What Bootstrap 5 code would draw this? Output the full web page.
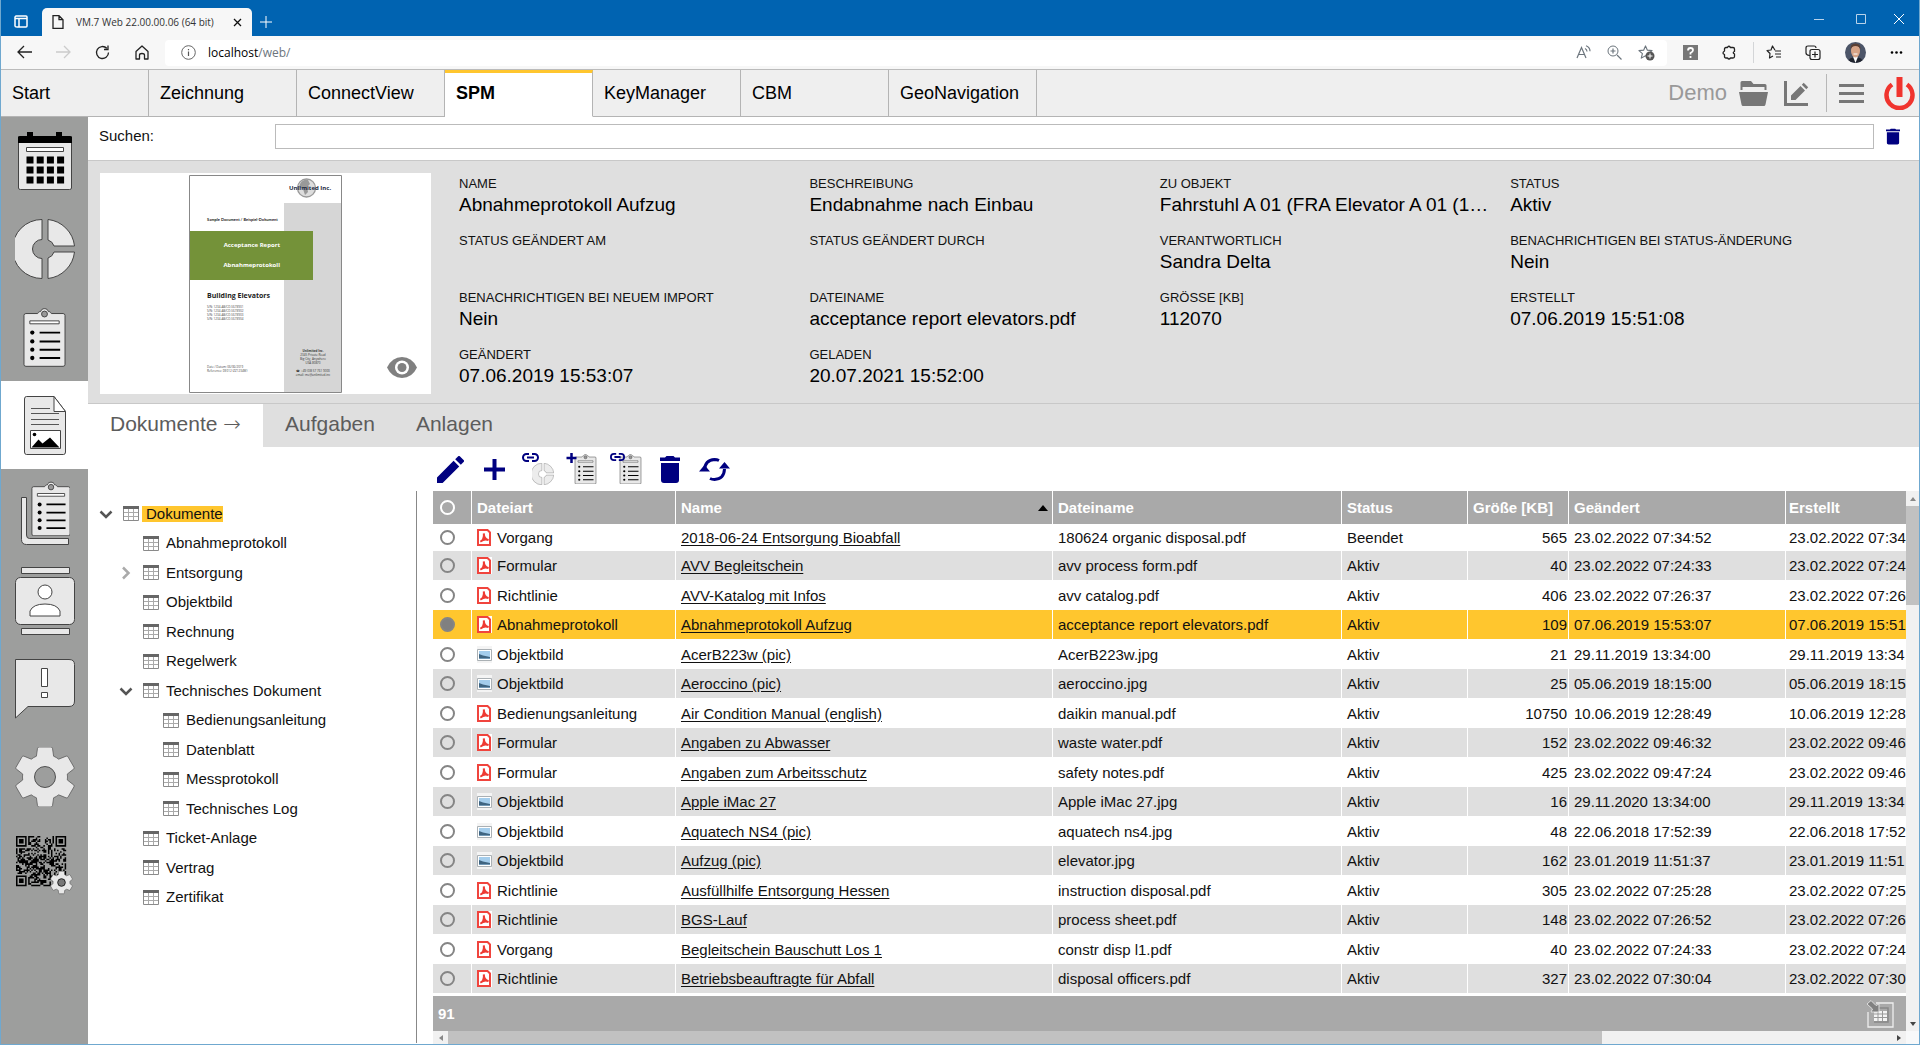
<!DOCTYPE html>
<html lang="de">
<head>
<meta charset="utf-8">
<meta name="viewport" content="width=device-width, initial-scale=1">
<title>VM.7 Web 22.00.00.06 (64 bit)</title>
<link href="https://cdn.jsdelivr.net/npm/bootstrap@5.3.0/dist/css/bootstrap.min.css" rel="stylesheet">
<style>
body{font-family:"Liberation Sans",Arial,sans-serif;font-size:15px;line-height:20px;color:#111;height:100vh;overflow:hidden;border:1px solid #6fa8cf;border-width:0 1px 1px 1px}
button{background:none;border:0;padding:0;color:inherit;line-height:0}
svg{display:block;flex:none}
.chrome-font{font-family:"Open Sans","Noto Sans",sans-serif}
.titlebar{height:36px;background:#0063b1;color:#fff;padding:0 11px 0 13px}
.page-tab{height:28px;width:210px;background:#f7f7f7;color:#333;border-radius:5px 5px 0 0;font-size:10px;padding:0 10px;margin-left:13px}
.addressbar{height:34px;background:#f7f7f7;border-bottom:1px solid #bbb;color:#222}
.address{height:26px;background:#fff;border-radius:4px;font-size:12px;padding:0 12px 0 16px;color:#555}
.nav-ico{width:39px;display:flex;justify-content:center}
.menubar{height:47px;background:#efefef;border-bottom:1px solid #b4b4b4}
.menubar a{width:148px;height:47px;border-right:1px solid #b4b4b4;border-bottom:1px solid #b4b4b4;padding-left:11px;font-size:18px;color:#000;text-decoration:none;display:flex;align-items:center}
.menubar a.current{background:#fff;border-top:3px solid #ffc62e;border-bottom-color:#fff;padding-bottom:3px;font-weight:700}
.demo{font-size:22px;color:#999}
.side{width:87px;background:#9d9e9d}
.side button{height:88px;display:flex;align-items:center;justify-content:center;width:100%}
.side button.current{background:#fff}
.search{height:44px;border-bottom:1px solid #c8c8c8;padding:0 19px 5px 11px}
.search label{width:176px}
.search input{height:25px;border:1px solid #bbb;border-radius:0;outline:0;padding:0 5px}
.detail{height:243px;background:#dfdfdf;border-bottom:1px solid #c8c8c8;padding:12px 0 0 12px}
.preview{width:331px;height:221px;background:#fff;position:relative;flex:none;display:flex;justify-content:center;padding-top:2px}
.preview button{position:absolute;right:14px;bottom:16px}
.fields{display:grid;grid-template-columns:repeat(4,24%);grid-auto-rows:57px;margin:1px 0 0 28px;min-width:0}
.fields dt{font-weight:400;font-size:13px;line-height:20px}
.fields dd{margin:0;font-size:19px;line-height:22px;height:22px;color:#000;white-space:nowrap}
.subtabs{height:43px;background:#dfdfdf;font-size:21px}
.subtabs a{color:#5c5c5c;text-decoration:none;height:43px;padding:0 21px 0 22px;line-height:39px}
.subtabs a.current{background:#fff;width:175px}
.subtabs a:last-child{padding-left:20px}
.subtabs span{font-family:"DejaVu Sans",sans-serif;font-weight:200}
.tools{height:44px;margin-left:346px}
.tools button{width:32px;height:32px;display:flex;align-items:center;justify-content:center}
.tree{width:329px;border-right:1px solid #888;padding:8px 0 0 10px;flex:none;list-style:none;margin:0 0 1px}
.tree li{display:flex;align-items:center;height:29px}
.tree li:nth-child(even){height:30px}
.tree .lv1{padding-left:20px}
.tree .lv2{padding-left:40px}
.tree .chev{width:16px;height:16px;margin-right:9px}
.tree a{color:#111;text-decoration:none;margin-left:3px;padding:0 0 0 4px;line-height:16px}
.tree a.sel{background:#ffc62e}
.gridwrap{margin-left:16px;min-width:0}
.docs{table-layout:fixed;width:100%;border-collapse:separate;border-spacing:0;white-space:nowrap}
.docs th{height:33px;background:#a9a9a9;color:#fff;font-weight:700;border-right:1px solid #fff}
.docs th,.docs td{padding:0 0 0 5px;overflow:hidden}
.docs td{height:29px;line-height:20px;border-right:1px solid #fff}
.docs tbody tr:nth-child(even) td{height:30px;background:#dfdfdf;border-bottom:1px solid #fff}
.docs tbody tr:first-child td{height:27px}
.docs tbody tr.sel td{background:#ffc62e}
.docs td:nth-child(6){text-align:right;padding:0 1px 0 0}
.docs th:last-child,.docs td:last-child{border-right:0;padding-left:3px}
.docs td a{color:#111;text-decoration:underline;text-underline-offset:2px}
.docs input{appearance:none;width:15px;height:15px;border:2px solid #858585;border-radius:50%;display:block;margin:0 0 0 2px}
.docs th input{border-color:#fff}
.docs input:checked{background:#808080}
.kind{display:flex;align-items:center;gap:5px}
.gridfoot{height:35px;background:#a9a9a9;color:#fff;font-weight:700;padding:0 12px 0 5px}
.sbar{background:#f1f1f1}
.vbar{width:13px}
.vbar .thumb{height:99px;background:#c1c1c1}
.hbar{height:13px}
.hbar .thumb{width:80%;background:#c1c1c1}
.arrow{height:15px;display:flex;align-items:center;justify-content:center}
.hbar .arrow{width:15px;height:13px}
</style>
<script src="https://cdn.jsdelivr.net/npm/bootstrap@5.3.0/dist/js/bootstrap.bundle.min.js"></script>
</head>
<body class="d-flex flex-column">
<svg width="0" height="0" class="position-absolute">
<defs>
<symbol id="tbl" viewBox="0 0 16 15"><path fill="#fff" stroke="#8a8a8a" d="M.5.5h15v14H.5z"/><path fill="#666" d="M0 0h16v3H0z"/><path stroke="#aaa" d="M5.5 3v11M10.500 3v11M1 6.500h14M1 10.500h14"/></symbol>
<symbol id="pdf" viewBox="0 0 15 17"><path fill="#fff" d="M0 0h15v17H0z"/><path fill="#fff" stroke="#f0443d" stroke-width="2" d="M1 1h9.500L13 3.500V16H1z"/><path fill="none" stroke="#ee3a33" stroke-width="2" d="M3.500 12.500c2-.5 4-4 3.300-8 .2 4 2 6 4.700 6.500-2.500-1-5.500-.5-8 1.500z"/></symbol>
<symbol id="pic" viewBox="0 0 15 17"><path fill="#f4f4f4" d="M0 0h15v17H0z"/><path fill="#fff" stroke="#aab0b4" d="M.5 3.500h14v11H.5z"/><path fill="#a4cdec" d="M2 5h11v8H2z"/><path fill="#3f6480" d="M2 8l4 1.500 7 1.500v1.500H2z"/></symbol>
<symbol id="clip" viewBox="0 0 44 60"><path fill="#e8e8e8" stroke="#444" d="M3 6h12c1-2 2-2 3-2 1-4 7-4 8 0 1 0 2 0 3 2h12q2 0 2 2v50q0 2-2 2H3q-2 0-2-2V8q0-2 2-2z"/><circle cx="22" cy="6.500" r="3" fill="#999" stroke="#444"/><path fill="#fff" stroke="#444" d="M7 13.500h30v3H7z"/><path stroke="#000" stroke-width="2" d="M17 25.500h21M17 34.500h21M17 43h21M17 51.500h21"/><g><circle cx="9.500" cy="25.500" r="2.200"/><circle cx="9.500" cy="34.500" r="2.200"/><circle cx="9.500" cy="43" r="2.200"/><circle cx="9.500" cy="51.500" r="2.200"/></g></symbol>
<symbol id="donut" viewBox="0 0 60 60"><path fill="#e8e8e8" stroke="#444" d="M27 .5v20a9.500 9.500 0 0 0 0 19v20A29.500 29.500 0 0 1 27 .5zM33 .5A30 30 0 0 1 59.500 27H39a9 9 0 0 0-6-6zM59.500 33A30 30 0 0 1 33 59.500V39a9 9 0 0 0 6-6z"/></symbol>
<symbol id="gear" viewBox="0 0 24 24"><path d="M19.430 12.980c.04-.32.070-.64.070-.98s-.03-.66-.07-.98l2.110-1.650c.19-.15.240-.42.120-.64l-2-3.460c-.12-.22-.39-.3-.61-.22l-2.490 1c-.52-.4-1.080-.73-1.690-.98l-.38-2.650A.49.490 0 0 0 14 2h-4c-.25 0-.46.180-.49.420l-.38 2.650c-.61.250-1.170.59-1.690.98l-2.490-1c-.23-.09-.49 0-.61.220l-2 3.460c-.13.220-.07.490.12.640l2.110 1.650c-.04.320-.07.650-.07.980s.03.660.07.980l-2.110 1.650c-.19.150-.24.420-.12.640l2 3.460c.12.220.39.300.61.220l2.490-1c.52.400 1.080.730 1.690.980l.38 2.650c.03.240.24.420.49.420h4c.25 0 .46-.18.490-.42l.38-2.650c.61-.25 1.170-.59 1.690-.98l2.490 1c.23.090.49 0 .61-.22l2-3.460c.12-.22.070-.49-.12-.64z"/></symbol>
<symbol id="trash" viewBox="4 3 16 18"><path d="M5 19c0 1.100.9 2 2 2h10c1.100 0 2-.9 2-2V7H5zM20 4h-4.500l-1-1h-5l-1 1H4v2h16z"/></symbol>
<symbol id="chain" viewBox="0 0 17 9"><path fill="none" stroke="#000080" stroke-width="2" d="M7 1H4.500a3.500 3.500 0 0 0 0 7H7M10 1h2.500a3.500 3.500 0 0 1 0 7H10M5 4.500h7"/></symbol>
<symbol id="star" viewBox="0 0 16 16"><path fill="none" stroke="currentColor" stroke-width="1.200" stroke-linejoin="round" d="M8 1l2 4.500 5 .5-3.700 3.200L12.500 14 8 11.500 3.500 14l1.200-4.800L1 6l5-.5z"/></symbol>
</defs>
</svg>

<div class="titlebar chrome-font d-flex align-items-end flex-none">
  <svg class="mb-2" width="15" height="13" viewBox="0 0 15 13"><path fill="none" stroke="#fff" stroke-width="1.500" d="M2 1h10q1 0 1 1v9q0 1-1 1H3q-2 0-2-1V2zM1 3.500h12M5 4v8"/></svg>
  <div class="page-tab d-flex align-items-center">
    <svg width="12" height="14" viewBox="0 0 12 14"><path fill="none" stroke="#222" stroke-width="1.300" d="M1 .7h6l4 4v8.600H1zM7 .7v4h4"/></svg>
    <span class="flex-grow-1 text-nowrap ms-2 ps-1">VM.7 Web 22.00.00.06 (64 bit)</span>
    <button type="button" aria-label="Tab schließen"><svg width="9" height="9" viewBox="0 0 9 9"><path stroke="#111" stroke-width="1.300" d="M1 1l7 7M8 1L1 8"/></svg></button>
  </div>
  <button type="button" class="ms-2 mb-2" aria-label="Neuer Tab"><svg width="12" height="12" viewBox="0 0 12 12"><path stroke="#fff" d="M6 0v12M0 6h12"/></svg></button>
  <div class="ms-auto d-flex align-items-center gap-4 mb-2 pb-1 me-1">
    <button type="button" class="me-2" aria-label="Minimieren"><svg width="10" height="10" viewBox="0 0 10 10"><path stroke="#b9d3ea" d="M0 5.500h10"/></svg></button>
    <button type="button" class="me-1" aria-label="Maximieren"><svg width="10" height="10" viewBox="0 0 10 10"><path fill="none" stroke="#b9d3ea" d="M.5.5h9v9h-9z"/></svg></button>
    <button type="button" aria-label="Schließen"><svg width="10" height="10" viewBox="0 0 10 10"><path stroke="#fff" d="M0 0l10 10M10 0L0 10"/></svg></button>
  </div>
</div>

<div class="addressbar chrome-font d-flex align-items-center">
  <div class="d-flex ps-1 me-1">
    <button type="button" class="nav-ico" aria-label="Zurück"><svg width="15" height="14" viewBox="0 0 15 14"><path fill="none" stroke="#222" stroke-width="1.300" d="M15 7H1M7 1L1 7l6 6"/></svg></button>
    <button type="button" class="nav-ico" aria-label="Vorwärts"><svg width="15" height="14" viewBox="0 0 15 14"><path fill="none" stroke="#ccc" stroke-width="1.300" d="M0 7h14M8 1l6 6-6 6"/></svg></button>
    <button type="button" class="nav-ico" aria-label="Neu laden"><svg width="15" height="15" viewBox="0 0 15 15"><path fill="none" stroke="#222" stroke-width="1.300" d="M13.500 7.500a6 6 0 1 1-1.700-4.200M13 .5v4H9"/></svg></button>
    <button type="button" class="nav-ico" aria-label="Startseite"><svg width="14" height="15" viewBox="0 0 14 15"><path fill="none" stroke="#222" stroke-width="1.300" stroke-linejoin="round" d="M1 6.500L7 1l6 5.500V14H9.500v-4q0-1.500-2.500-1.500T4.500 10v4H1z"/></svg></button>
  </div>
  <div class="address d-flex align-items-center flex-grow-1">
    <svg width="15" height="15" viewBox="0 0 15 15"><circle cx="7.500" cy="7.500" r="6.800" fill="none" stroke="#666"/><path stroke="#555" stroke-width="1.200" d="M7.500 6.500V11M7.500 4v1.300"/></svg>
    <a href="#" class="text-decoration-none ms-2 ps-1 text-secondary"><span class="text-black">localhost</span>/web/</a>
    <div class="ms-auto d-flex align-items-center gap-3 text-secondary">
      <svg width="15" height="15" viewBox="0 0 15 15"><path fill="none" stroke="currentColor" stroke-width="1.200" d="M1 13L5.500 2.500 10 13M2.500 9.500h6M9 3.500q2 1 2 3M10 .8q4 1.500 4 5.500"/></svg>
      <svg width="15" height="15" viewBox="0 0 15 15"><path fill="none" stroke="currentColor" stroke-width="1.200" d="M10 10l4.500 4.500M3.500 6h5M6 3.500v5"/><circle cx="6" cy="6" r="5" fill="none" stroke="currentColor"/></svg>
      <svg width="17" height="16" viewBox="0 0 17 16"><use href="#star" width="15" height="15"/><circle cx="12" cy="11" r="4.500" fill="#555"/><path stroke="#fff" d="M12 8.500v5M9.500 11h5"/></svg>
    </div>
  </div>
  <div class="d-flex align-items-center ps-3 pe-3">
    <svg width="15" height="15" viewBox="0 0 15 15"><path fill="#777" d="M0 0h15v15H0z"/><path fill="none" stroke="#fff" stroke-width="1.800" d="M5 5.500q0-2.500 2.500-2.500T10 5.200Q10 6.500 7.500 8v1.500M7.500 11v2"/></svg>
    <svg class="ms-4" width="15" height="15" viewBox="0 0 15 15"><path fill="none" stroke="#222" stroke-width="1.300" stroke-linejoin="round" d="M4 2.500h1.500q1-2.500 3 0H11q1.500 0 1.500 1.500v2.500q-2.500 1 0 2.500v2.500q0 1.500-1.500 1.500H8.500q-1.500 2-3 0H4q-1.500 0-1.500-1.500V9.500Q-.5 8 2.500 6V4q0-1.500 1.500-1.500z"/></svg>
    <div class="vr ms-3 me-2 my-0 text-secondary"></div>
    <svg class="ms-1" width="15" height="15" viewBox="0 0 15 15"><path fill="none" stroke="#222" stroke-width="1.200" stroke-linejoin="round" d="M9 5.200L6.500 1 5 5l-4 .5L4 8.500 3.500 13 7 11M9 6h6M9 9h6M10 12h5"/></svg>
    <svg class="ms-4" width="16" height="16" viewBox="0 0 16 16"><path fill="none" stroke="#222" stroke-width="1.200" d="M4.500 10.500Q1 10 1 8V3q0-2 2-2h6q2 0 2 2M7 4.500h6q2 0 2 2v6q0 2-2 2H7q-2 0-2-2v-6q0-2 2-2zM10 6.500v6M7 9.500h6"/></svg>
    <svg class="ms-4" width="21" height="21" viewBox="0 0 21 21"><clipPath id="av"><circle cx="10.500" cy="10.500" r="10.500"/></clipPath><g clip-path="url(#av)"><path fill="#4c5568" d="M0 0h21v21H0z"/><path fill="#20242f" d="M2 21q2-6 8.500-6t8.500 6z"/><path fill="#fff" d="M8 14.500h5L10.500 21z"/><ellipse cx="10.500" cy="9" rx="4.500" ry="6.500" fill="#d7a487"/><path fill="#5a4035" d="M5.500 7.500q-.5-6 5-6t5 6q-1-3.500-5-3.500t-5 3.500z"/><path stroke="#fff" d="M8.500 12h4"/></g></svg>
    <svg class="ms-4" width="13" height="5" viewBox="0 0 13 5"><circle cx="2" cy="2.500" r="1.300"/><circle cx="6.500" cy="2.500" r="1.300"/><circle cx="11" cy="2.500" r="1.300"/></svg>
  </div>
</div>

<nav class="menubar d-flex">
  <a href="#">Start</a><a href="#">Zeichnung</a><a href="#">ConnectView</a><a href="#" class="current">SPM</a><a href="#">KeyManager</a><a href="#">CBM</a><a href="#">GeoNavigation</a>
  <div class="ms-auto d-flex align-items-center">
    <span class="demo">Demo</span>
    <button type="button" class="ms-2 ps-1" aria-label="Öffnen"><svg width="29" height="25" viewBox="0 0 29 25"><path fill="#777" d="M1.500 9V1.500Q1.500 0 3 0h9l2.500 3H26q1.500 0 1.500 1.500V9h-2V6h-22v3zM0 11h29l-2.500 12.500Q26 25 25 25H4q-1.200 0-1.500-1.500z"/></svg></button>
    <button type="button" class="ms-3" aria-label="Auswertung"><svg width="26" height="25" viewBox="0 0 26 25"><path fill="#777" d="M0 0h3v22h21v3H0zM7 14.500V19h4.500L21 9.500 16.500 5zM17.800 3.700l1.900-1.900L24.200 6.300l-1.900 1.900z"/></svg></button>
    <div class="vr ms-3 me-2 my-1"></div>
    <button type="button" class="ms-1" aria-label="Menü"><svg width="25" height="19" viewBox="0 0 25 19"><path stroke="#777" stroke-width="3" d="M0 1.500h25M0 9.500h25M0 17.500h25"/></svg></button>
    <button type="button" class="ms-3 ps-1 me-1" aria-label="Abmelden"><svg width="31" height="33" viewBox="0 0 31 33"><path fill="none" stroke="#f0342e" stroke-width="4.500" d="M8 7.500a13 13 0 1 0 15 0"/><path fill="#f0342e" d="M12.500 0h6v20h-6z"/></svg></button>
  </div>
</nav>

<div class="d-flex flex-grow-1" style="min-height:0">
  <aside class="side flex-shrink-0">
    <button type="button" aria-label="Kalender"><svg width="54" height="58" viewBox="0 0 54 58"><path d="M9 0h6v5H9zM38 0h6v5h-6z"/><path fill="#e8e8e8" stroke="#444" d="M.5 6h53v50q0 1.500-2 1.500h-49q-2 0-2-1.500z"/><path d="M0 11V5q0-1 2-1h50q2 0 2 1v6z"/><path fill="#fff" stroke="#444" d="M8.500 15.500h37v4h-37z"/><path stroke="#000" stroke-width="7" stroke-dasharray="7 3.200" d="M8.500 28h38M8.500 38h38M8.500 48h38"/></svg></button>
    <button type="button" aria-label="Objekte"><svg width="60" height="60"><use href="#donut"/></svg></button>
    <button type="button" aria-label="Aufgaben"><svg width="43" height="60"><use href="#clip"/></svg></button>
    <button type="button" class="current" aria-label="Dokumente"><svg width="42" height="59" viewBox="0 0 42 59"><path fill="#e8e8e8" stroke="#444" d="M2.500.5H30l11.500 15V56q0 2.500-2 2.500h-37Q.5 58.500.5 56V3Q.5.500 2.500.5z"/><path fill="#fff" stroke="#444" d="M30 .5v15h11.500z"/><path stroke="#555" d="M7 12.500h19M7 17.500h28M7 23.500h28M7 28.500h28"/><path fill="#fff" stroke="#444" d="M6.500 34.500h30v18h-30z"/><circle cx="10.500" cy="38.500" r="1.800"/><path d="M7.500 51.500l7-8 4 4 7.500-6 9.500 10z"/></svg></button>
    <button type="button" aria-label="Vorlagen"><svg width="50" height="64" viewBox="0 0 50 64"><path fill="#e8e8e8" stroke="#444" d="M1.500 16.500h5V54q0 3.500 3 3.500h39v6h-42q-5 0-5-5z"/><svg x="11" y="0" width="40" height="55"><use href="#clip"/></svg></svg></button>
    <button type="button" aria-label="Kontakte"><svg width="60" height="68" viewBox="0 0 60 68"><g fill="#e8e8e8" stroke="#444"><path d="M6.500.5h48v6h-48zM6.500 61.500h48v6h-48z"/><rect x=".5" y="10.500" width="59" height="47" rx="5"/><circle cx="30" cy="25" r="7" fill="#fff"/><path fill="#fff" d="M15 49v-5q3-7 15-7t15 7v5z"/></g></svg></button>
    <button type="button" aria-label="Meldungen"><svg width="60" height="60" viewBox="0 0 60 60"><path fill="#e8e8e8" stroke="#444" d="M.5.500H54q5.500 0 5.500 5V42q0 5.500-5.500 5.500H13L.5 59z"/><path fill="#fff" stroke="#444" d="M26.500 9.500h6v18h-6zM26.500 33.500h6v5h-6z"/></svg></button>
    <button type="button" aria-label="Einstellungen"><svg width="60" height="60" viewBox="2 2 20 20"><use href="#gear" x="0" y="0" width="24" height="24" fill="#e8e8e8" stroke="#555" stroke-width=".25"/><circle cx="12" cy="12" r="3.500" fill="#9d9e9d" stroke="#444" stroke-width=".3"/></svg></button>
    <button type="button" aria-label="QR-Code"><svg width="59" height="60" viewBox="0 0 59 60"><path id="qr" transform="translate(1 1) scale(1.520)"/><use href="#gear" x="33" y="34" width="27" height="27" fill="#e8e8e8" stroke="#555" stroke-width=".5"/><circle cx="46.500" cy="47.500" r="3.800" fill="#777" stroke="#222"/></svg></button>
  </aside>

  <main class="flex-grow-1 d-flex flex-column" style="min-width:0">
    <form class="search d-flex align-items-center">
      <label for="q">Suchen:</label>
      <input id="q" type="text" class="flex-grow-1">
      <button type="button" class="ms-2" aria-label="Suche löschen"><svg class="ms-1" width="14" height="17" fill="#000080"><use href="#trash"/></svg></button>
    </form>

    <section class="detail d-flex">
      <div class="preview">
        <svg width="154" height="218" viewBox="0 0 154 218" font-family="Open Sans, sans-serif">
          <path fill="#fff" stroke="#888" d="M.5.500h152v217H.5z"/><path fill="#d6d6d6" d="M95 28h57v189H95z"/>
          <circle cx="117.500" cy="13" r="9" fill="#ddd" stroke="#999" stroke-width="1.300"/><path fill="#999" d="M111 9q3-5 8-4l2 4-3 3 1 5-3 3-2-6-4-2z"/>
          <text x="100" y="15" font-size="6" font-weight="700" fill="#222a40">Unlimited Inc.</text>
          <text x="18" y="46" font-size="4" font-weight="700" fill="#222" font-family="Lato, sans-serif">Sample Document / Beispiel-Dokument</text>
          <path fill="#749239" d="M1 56h123v49H1z"/>
          <g font-size="6" font-weight="700" fill="#fff" text-anchor="end"><text x="91" y="72">Acceptance Report</text><text x="91" y="92">Abnahmeprotokoll</text></g>
          <text x="18" y="123" font-size="7" font-weight="700" fill="#222">Building Elevators</text>
          <g font-size="3" fill="#444"><text x="18" y="133">S/N: 1234-AB/CD-5678901</text><text x="18" y="137">S/N: 1234-AB/CD-5678902</text><text x="18" y="141">S/N: 1234-AB/CD-5678903</text><text x="18" y="145">S/N: 1234-AB/CD-5678904</text><text x="18" y="193">Date / Datum: 06/06/2019</text><text x="18" y="197">Reference: DE012 (ZZ1234W)</text></g>
          <g font-size="3" fill="#333" text-anchor="middle"><text x="124" y="177" font-weight="700">Unlimited Inc.</text><text x="124" y="181">2345 Private Road</text><text x="124" y="185">Big City, Anywhere</text><text x="124" y="189">USA 80870</text><text x="124" y="197">☎ +49 (0)8 57 761 9000</text><text x="124" y="201">email: me@unlimited.inc</text></g>
        </svg>
        <button type="button" aria-label="Vorschau"><svg width="30" height="21" viewBox="0 0 30 21"><path fill="#808080" d="M0 10.500Q5 0 15 0t15 10.500Q25 21 15 21T0 10.500z"/><circle cx="15" cy="10.500" r="7" fill="#fff"/><circle cx="15" cy="10.500" r="4.500" fill="#808080"/></svg></button>
      </div>
      <dl class="fields flex-grow-1">
        <div><dt>NAME</dt><dd>Abnahmeprotokoll Aufzug</dd></div>
        <div><dt>BESCHREIBUNG</dt><dd>Endabnahme nach Einbau</dd></div>
        <div><dt>ZU OBJEKT</dt><dd>Fahrstuhl A 01 (FRA Elevator A 01 (1…</dd></div>
        <div><dt>STATUS</dt><dd>Aktiv</dd></div>
        <div><dt>STATUS GEÄNDERT AM</dt><dd></dd></div>
        <div><dt>STATUS GEÄNDERT DURCH</dt><dd></dd></div>
        <div><dt>VERANTWORTLICH</dt><dd>Sandra Delta</dd></div>
        <div><dt>BENACHRICHTIGEN BEI STATUS-ÄNDERUNG</dt><dd>Nein</dd></div>
        <div><dt>BENACHRICHTIGEN BEI NEUEM IMPORT</dt><dd>Nein</dd></div>
        <div><dt>DATEINAME</dt><dd>acceptance report elevators.pdf</dd></div>
        <div><dt>GRÖSSE [KB]</dt><dd>112070</dd></div>
        <div><dt>ERSTELLT</dt><dd>07.06.2019 15:51:08</dd></div>
        <div><dt>GEÄNDERT</dt><dd>07.06.2019 15:53:07</dd></div>
        <div><dt>GELADEN</dt><dd>20.07.2021 15:52:00</dd></div>
      </dl>
    </section>

    <nav class="subtabs d-flex"><a href="#" class="current text-nowrap">Dokumente <span>→</span></a><a href="#">Aufgaben</a><a href="#">Anlagen</a></nav>

    <div class="tools d-flex align-items-center">
      <div class="d-flex" style="column-gap:12px">
        <button type="button" aria-label="Bearbeiten"><svg width="27" height="27" viewBox="3 3 18 18" fill="#000080"><path d="M3 17.250V21h3.750L17.810 9.940l-3.750-3.750zM20.710 7.040a1 1 0 0 0 0-1.410l-2.340-2.340a1 1 0 0 0-1.410 0l-1.830 1.830 3.750 3.750z"/></svg></button>
        <button type="button" aria-label="Neu"><svg width="21" height="21" viewBox="0 0 21 21"><path stroke="#000080" stroke-width="4" d="M10.500 0v21M0 10.500h21"/></svg></button>
        <button type="button" aria-label="Objekt verknüpfen"><svg width="32" height="32" viewBox="0 0 32 32"><use href="#chain" width="17" height="9"/><use href="#donut" x="10" y="10" width="22" height="22" opacity=".8"/></svg></button>
        <button type="button" aria-label="Aufgabe anlegen"><svg width="32" height="32" viewBox="0 0 32 32"><use href="#clip" x="8" y="1" width="23" height="30"/><path stroke="#000080" stroke-width="2.500" d="M5.500 0v10M.5 5h10"/></svg></button>
        <button type="button" aria-label="Aufgabe verknüpfen"><svg width="32" height="32" viewBox="0 0 32 32"><use href="#clip" x="9" y="1" width="23" height="30"/><use href="#chain" width="15" height="8"/></svg></button>
        <button type="button" aria-label="Löschen"><svg width="22" height="27" fill="#000080" viewBox="0 0 22 27"><path d="M2 7h18v17q0 3-3 3H5q-3 0-3-3zM1 1.500h5L7.500 0h7L16 1.500h5v3.500H1z"/></svg></button>
        <button type="button" aria-label="Aktualisieren"><svg width="31" height="25" viewBox="0 0 31 25"><path fill="none" stroke="#000080" stroke-width="3" d="M5.500 13Q6 3 15.500 2.500q2.500 0 4.500 1M25.500 12Q25 22 15.500 22.500q-2.500 0-4.500-1"/><path fill="#000080" d="M0 14.500L5.500 8l5.500 6.500zM20 11.500L25.500 5l5.500 6.500z"/></svg></button>
      </div>
    </div>

    <div class="d-flex flex-grow-1" style="min-height:0">
      <ul class="tree" id="tree"></ul>
      <div class="gridwrap flex-grow-1 d-flex flex-column">
        <div class="d-flex flex-grow-1" style="min-height:0">
          <div class="flex-grow-1 d-flex flex-column overflow-hidden">
            <div class="flex-grow-1 overflow-hidden">
              <table class="docs">
                <colgroup><col width="39"><col width="204"><col width="377"><col width="289"><col width="126"><col width="101"><col width="217"><col></colgroup>
                <thead><tr><th><input type="radio" name="all" aria-label="Alle"></th><th>Dateiart</th><th><div class="d-flex align-items-center justify-content-between pe-1">Name<svg width="10" height="6" viewBox="0 0 10 6"><path d="M0 6l5-6 5 6z"/></svg></div></th><th>Dateiname</th><th>Status</th><th>Größe [KB]</th><th>Geändert</th><th>Erstellt</th></tr></thead>
                <tbody id="rows"></tbody>
              </table>
            </div>
            <div class="gridfoot d-flex align-items-center justify-content-between flex-shrink-0"><span>91</span>
              <button type="button" aria-label="Tabelle exportieren"><svg width="28" height="28" viewBox="0 0 28 28"><path fill="none" stroke="#eee" stroke-width="1.300" d="M10 3h17v24H2V12"/><path fill="none" stroke="#888" stroke-width="1.500" d="M13 8h9v14H8"/><path fill="#f4f4f4" d="M8 11h13v10H8z"/><path stroke="#999" d="M8 14h13M8 17.500h13M12 11v10M16.500 11v10"/><path fill="#808080" stroke="#ddd" d="M1 4l4-3.500 5 5L13 4v8H5l1.500-3z"/></svg></button>
            </div>
          </div>
          <div class="sbar vbar flex-shrink-0 d-flex flex-column"><div class="arrow"><svg width="6" height="4" viewBox="0 0 6 4"><path fill="#888" d="M0 4l3-4 3 4z"/></svg></div><div class="thumb"></div><div class="arrow mt-auto"><svg width="6" height="4" viewBox="0 0 6 4"><path fill="#444" d="M0 0l3 4 3-4z"/></svg></div></div>
        </div>
        <div class="sbar hbar d-flex flex-shrink-0"><div class="arrow"><svg width="4" height="6" viewBox="0 0 4 6"><path fill="#888" d="M4 0L0 3l4 3z"/></svg></div><div class="flex-grow-1 d-flex"><div class="thumb"></div></div><div class="arrow"><svg width="4" height="6" viewBox="0 0 4 6"><path fill="#444" d="M0 0l4 3-4 3z"/></svg></div><div class="vbar bg-secondary-subtle"></div></div>
      </div>
    </div>
  </main>
</div>
<script>
// Tree nodes: level, label, state (o = open, c = closed)
const nodes = [[0,'Dokumente','o'],[1,'Abnahmeprotokoll'],[1,'Entsorgung','c'],[1,'Objektbild'],[1,'Rechnung'],[1,'Regelwerk'],[1,'Technisches Dokument','o'],[2,'Bedienungsanleitung'],[2,'Datenblatt'],[2,'Messprotokoll'],[2,'Technisches Log'],[1,'Ticket-Anlage'],[1,'Vertrag'],[1,'Zertifikat']];
const chev = {o:'<path fill="none" stroke="#555" stroke-width="2.500" d="M2.500 5.500L8 11l5.500-5.500"/>', c:'<path fill="none" stroke="#aaa" stroke-width="2.500" d="M5 2.500L10.500 8 5 13.500"/>'};
document.getElementById('tree').innerHTML = nodes.map(n => `<li class="lv${n[0]}"><svg class="chev" viewBox="0 0 16 16">${chev[n[2]] || ''}</svg><svg width="16" height="15"><use href="#tbl"/></svg><a href="#" class="${n[0] ? '' : 'sel'}">${n[1]}</a></li>`).join('');

const docs = [
['Vorgang','2018-06-24 Entsorgung Bioabfall','180624 organic disposal.pdf','Beendet',565,'23.02.2022 07:34:52','23.02.2022 07:34'],
['Formular','AVV Begleitschein','avv process form.pdf','Aktiv',40,'23.02.2022 07:24:33','23.02.2022 07:24'],
['Richtlinie','AVV-Katalog mit Infos','avv catalog.pdf','Aktiv',406,'23.02.2022 07:26:37','23.02.2022 07:26'],
['Abnahmeprotokoll','Abnahmeprotokoll Aufzug','acceptance report elevators.pdf','Aktiv',109,'07.06.2019 15:53:07','07.06.2019 15:51'],
['Objektbild','AcerB223w (pic)','AcerB223w.jpg','Aktiv',21,'29.11.2019 13:34:00','29.11.2019 13:34'],
['Objektbild','Aeroccino (pic)','aeroccino.jpg','Aktiv',25,'05.06.2019 18:15:00','05.06.2019 18:15'],
['Bedienungsanleitung','Air Condition Manual (english)','daikin manual.pdf','Aktiv',10750,'10.06.2019 12:28:49','10.06.2019 12:28'],
['Formular','Angaben zu Abwasser','waste water.pdf','Aktiv',152,'23.02.2022 09:46:32','23.02.2022 09:46'],
['Formular','Angaben zum Arbeitsschutz','safety notes.pdf','Aktiv',425,'23.02.2022 09:47:24','23.02.2022 09:46'],
['Objektbild','Apple iMac 27','Apple iMac 27.jpg','Aktiv',16,'29.11.2020 13:34:00','29.11.2019 13:34'],
['Objektbild','Aquatech NS4 (pic)','aquatech ns4.jpg','Aktiv',48,'22.06.2018 17:52:39','22.06.2018 17:52'],
['Objektbild','Aufzug (pic)','elevator.jpg','Aktiv',162,'23.01.2019 11:51:37','23.01.2019 11:51'],
['Richtlinie','Ausfüllhilfe Entsorgung Hessen','instruction disposal.pdf','Aktiv',305,'23.02.2022 07:25:28','23.02.2022 07:25'],
['Richtlinie','BGS-Lauf','process sheet.pdf','Aktiv',148,'23.02.2022 07:26:52','23.02.2022 07:26'],
['Vorgang','Begleitschein Bauschutt Los 1','constr disp l1.pdf','Aktiv',40,'23.02.2022 07:24:33','23.02.2022 07:24'],
['Richtlinie','Betriebsbeauftragte für Abfall','disposal officers.pdf','Aktiv',327,'23.02.2022 07:30:04','23.02.2022 07:30']];
document.getElementById('rows').innerHTML = docs.map((d, i) => `<tr class="${i === 3 ? 'sel' : ''}"><td><input type="radio" name="doc" aria-label="${d[1]}" ${i === 3 ? 'checked' : ''}></td><td><div class="kind"><svg width="15" height="17"><use href="#${d[0] === 'Objektbild' ? 'pic' : 'pdf'}"/></svg>${d[0]}</div></td><td><a href="#">${d[1]}</a></td>${d.slice(2).map(v => `<td>${v}</td>`).join('')}</tr>`).join('');

// QR symbol: three finder patterns and a pseudo-random data field
let path = '', seed = 7;
const finder = (x, y) => { const a = Math.max(Math.abs(x - 3), Math.abs(y - 3)); return a === 3 || a < 2; };
for (let y = 0; y < 33; y++) for (let x = 0; x < 33; x++) {
  seed = (seed * 16807) % 2147483647;
  let on = (seed >> 8) % 2 === 0;
  if (x < 8 && y < 8) on = x < 7 && y < 7 && finder(x, y);
  if (x > 24 && y < 8) on = x > 25 && y < 7 && finder(x - 26, y);
  if (x < 8 && y > 24) on = x < 7 && y > 25 && finder(x, y - 26);
  if (on) path += `M${x} ${y}h1v1h-1z`;
}
document.getElementById('qr').setAttribute('d', path);
</script>
</body>
</html>
